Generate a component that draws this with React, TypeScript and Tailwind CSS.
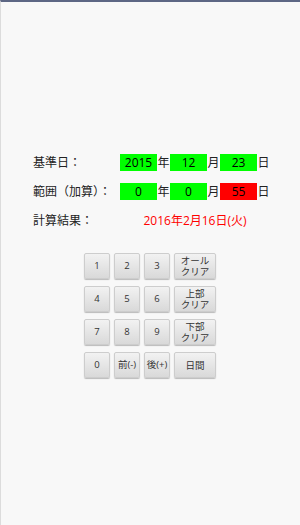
const font = { fontFamily: '"Open Sans", "Noto Sans CJK JP", sans-serif' };

const Box = ({ value, red }: { value: string; red?: boolean }) => (
  <div
    className={`w-[37px] h-[17px] flex items-center justify-center text-[12px] text-black leading-none ${
      red ? 'bg-[#ff0000]' : 'bg-[#00ff00]'
    }`}
  >
    {value}
  </div>
);

const Unit = ({ children }: { children: string }) => (
  <div className="w-[13px] text-center text-[12px] text-[#222] leading-none">{children}</div>
);

const DateRow = ({ label, values, red }: { label: string; values: string[]; red?: boolean }) => (
  <div className="flex items-center h-[17px]">
    <div className="w-[87px] text-[12px] text-[#222] whitespace-nowrap">{label}</div>
    <Box value={values[0]} />
    <Unit>年</Unit>
    <Box value={values[1]} />
    <Unit>月</Unit>
    <Box value={values[2]} red={red} />
    <Unit>日</Unit>
  </div>
);

const Key = ({ label, wide }: { label: string; wide?: boolean }) => (
  <button
    className={`h-[26px] ${wide ? 'w-[42px]' : 'w-[26px]'} flex items-center justify-center rounded-[2px] border border-[#cdcdcd] bg-gradient-to-b from-[#f2f2f2] to-[#d9d9d9] shadow-[0_1px_1px_rgba(0,0,0,0.25)] text-[#333] whitespace-pre-line text-center ${
      wide ? 'text-[9.5px] leading-[11px]' : 'text-[9.5px] leading-none'
    }`}
  >
    {label}
  </button>
);

const keys: { label: string; wide?: boolean }[] = [
  { label: '1' },
  { label: '2' },
  { label: '3' },
  { label: 'オール\nクリア', wide: true },
  { label: '4' },
  { label: '5' },
  { label: '6' },
  { label: '上部\nクリア', wide: true },
  { label: '7' },
  { label: '8' },
  { label: '9' },
  { label: '下部\nクリア', wide: true },
  { label: '0' },
  { label: '前(-)' },
  { label: '後(+)' },
  { label: '日間', wide: true },
];

export default function App() {
  return (
    <div
      className="w-[300px] h-[525px] bg-[#f8f8f8] border-t-2 border-t-[#5d6784] border-l border-l-[#dcdcdc] overflow-hidden"
      style={font}
    >
      <div className="pt-[152px] pl-[32px] flex flex-col gap-[12px]">
        <DateRow label="基準日：" values={['2015', '12', '23']} />
        <DateRow label="範囲（加算）：" values={['0', '0', '55']} red />
        <div className="flex items-center h-[17px]">
          <div className="w-[87px] text-[12px] text-[#222]">計算結果：</div>
          <div className="w-[150px] text-center text-[12px] text-[#ff0000]">2016年2月16日(火)</div>
        </div>
      </div>
      <div className="mt-[24px] ml-[83px] grid grid-cols-[26px_26px_26px_42px] gap-x-[4px] gap-y-[7px] w-fit">
        {keys.map((k) => (
          <Key key={k.label} label={k.label} wide={k.wide} />
        ))}
      </div>
    </div>
  );
}
